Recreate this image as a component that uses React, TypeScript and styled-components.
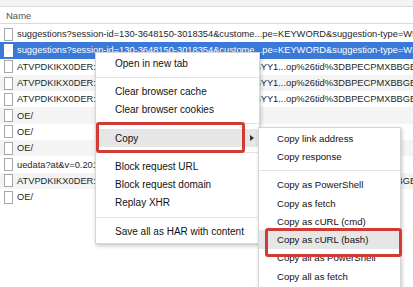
import React from "react";
import styled, { createGlobalStyle } from "styled-components";

const GlobalStyle = createGlobalStyle`
  html, body { margin: 0; padding: 0; background: #ffffff; }
  body { font-family: "Liberation Sans", Arial, sans-serif; }
`;

const Page = styled.div`
  position: relative;
  width: 413px;
  height: 287px;
  overflow: hidden;
  background: #ffffff;
`;

const TopStrip = styled.div`
  height: 6px;
  background: #f3f3f3;
  border-bottom: 1px solid #dadada;
`;

const Header = styled.div`
  height: 16px;
  display: flex;
  align-items: center;
  padding-left: 6px;
  font-size: 9.5px;
  color: #555;
  border-bottom: 1px solid #dadada;
  background: #ffffff;
`;

const Rows = styled.div`
  display: flex;
  flex-direction: column;
  padding-top: 2px;
`;

const Row = styled.div<{ $selected?: boolean; $alt?: boolean }>`
  height: 16.3px;
  display: flex;
  align-items: center;
  gap: 4px;
  padding-left: 4px;
  white-space: nowrap;
  overflow: hidden;
  font-size: 9.3px;
  color: ${(p) => (p.$selected ? "#ffffff" : "#262626")};
  background: ${(p) => (p.$selected ? "#3a79d8" : p.$alt ? "#f4f4f4" : "#ffffff")};
`;

const FileIcon = styled.span<{ $selected?: boolean }>`
  flex: none;
  width: 7px;
  height: 11px;
  border: 1px solid ${(p) => (p.$selected ? "#ffffff" : "#a8a8a8")};
  background: #ffffff;
`;

const Menu = styled.div`
  position: absolute;
  left: 95px;
  top: 52px;
  width: 165px;
  padding: 1px 0 3px;
  background: #ffffff;
  border: 1px solid #d6d6d6;
  box-shadow: 1px 2px 4px rgba(0, 0, 0, 0.22);
  display: flex;
  flex-direction: column;
  box-sizing: border-box;
`;

const SubMenu = styled(Menu)`
  left: 258px;
  top: 127px;
  width: 143px;
`;

const Item = styled.div<{ $active?: boolean; $small?: boolean }>`
  position: relative;
  height: 18.3px;
  display: flex;
  align-items: center;
  padding-left: ${(p) => (p.$small ? "18px" : "19px")};
  font-size: ${(p) => (p.$small ? "9.6px" : "10px")};
  color: #111;
  white-space: nowrap;
  background: ${(p) => (p.$active ? "#e6e6e6" : "transparent")};
`;

const Arrow = styled.span`
  position: absolute;
  right: 5px;
  top: 6px;
  width: 0;
  height: 0;
  border-top: 3px solid transparent;
  border-bottom: 3px solid transparent;
  border-left: 4px solid #333;
`;

const Separator = styled.div`
  height: 1px;
  margin: 4.5px 0;
  background: #e3e3e3;
`;

const Annotation = styled.div`
  position: absolute;
  border: 3px solid #d23a35;
  border-radius: 3px;
  box-sizing: border-box;
`;

const atv = "ATVPDKIKX0DER:1:B7T2PHK8BEXN4M0Q9ZW3R6TDF5YY1...op%26tid%3DBPECPMXBBGE5W";

const rows = [
  "suggestions?session-id=130-3648150-3018354&custome...pe=KEYWORD&suggestion-type=WIDGET",
  "suggestions?session-id=130-3648150-3018354&custome...pe=KEYWORD&suggestion-type=WIDGET",
  atv,
  atv,
  atv,
  "OE/",
  "OE/",
  "OE/",
  "uedata?at&v=0.201036.0&id=BPECPMXBBGE5W&ctb=1&m=1&sc=BPECPMXBBGE5W",
  atv,
  "OE/",
];

const subItems = [
  "Copy link address",
  "Copy response",
  "-",
  "Copy as PowerShell",
  "Copy as fetch",
  "Copy as cURL (cmd)",
  "Copy as cURL (bash)",
  "Copy all as PowerShell",
  "Copy all as fetch",
  "Copy all as cURL (cmd)",
];

export default function App() {
  return (
    <Page>
      <GlobalStyle />
      <TopStrip />
      <Header>Name</Header>
      <Rows>
        {rows.map((r, i) => (
          <Row key={i} $selected={i === 1} $alt={i % 2 === 1}>
            <FileIcon $selected={i === 1} />
            {r}
          </Row>
        ))}
      </Rows>

      <Menu>
        <Item>Open in new tab</Item>
        <Separator />
        <Item>Clear browser cache</Item>
        <Item>Clear browser cookies</Item>
        <Separator />
        <Item $active>
          Copy
          <Arrow />
        </Item>
        <Separator />
        <Item>Block request URL</Item>
        <Item>Block request domain</Item>
        <Item>Replay XHR</Item>
        <Separator />
        <Item>Save all as HAR with content</Item>
      </Menu>

      <SubMenu>
        {subItems.map((s, i) =>
          s === "-" ? (
            <Separator key={i} />
          ) : (
            <Item key={i} $small $active={s === "Copy as cURL (bash)"}>
              {s}
            </Item>
          )
        )}
      </SubMenu>

      <Annotation style={{ left: 96, top: 122, width: 149, height: 31 }} />
      <Annotation style={{ left: 265, top: 228, width: 137, height: 29 }} />
    </Page>
  );
}
